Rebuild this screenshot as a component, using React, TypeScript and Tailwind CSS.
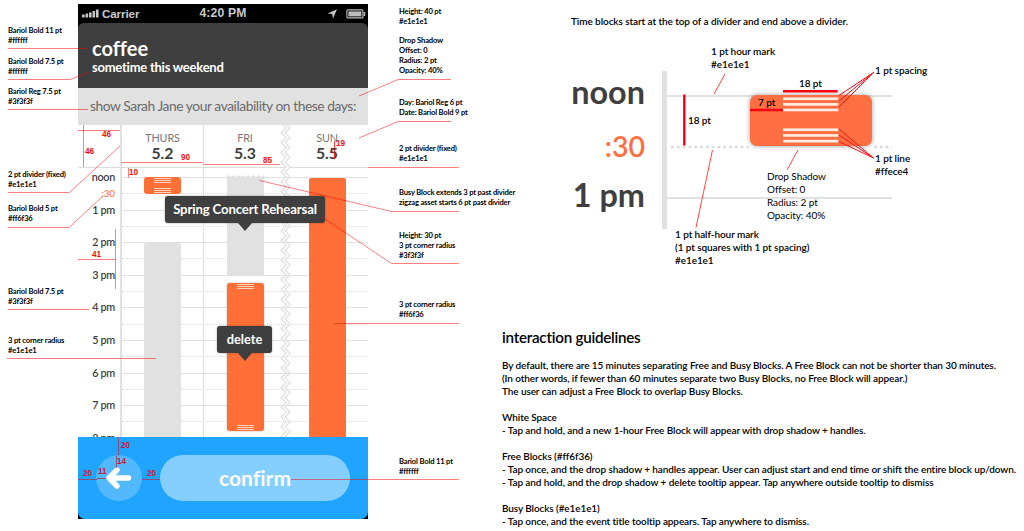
import React from "react";

type NoteProps = { at: string; lines: string[] };

/* Small callout label beside the phone */
function Note({ at, lines }: NoteProps) {
  return (
    <div className={"absolute whitespace-nowrap text-[7.6px] font-bold leading-[9.75px] tracking-[-0.17px] text-black " + at}>
      {lines.map((l, i) => (
        <p key={i}>{l}</p>
      ))}
    </div>
  );
}

/* Label inside the enlarged block diagram */
function Label({ at, lines }: NoteProps) {
  return (
    <div className={"absolute whitespace-nowrap text-[10px] leading-[13.1px] tracking-[-0.08px] text-black " + at}>
      {lines.map((l, i) => (
        <p key={i}>{l}</p>
      ))}
    </div>
  );
}

/* Red pixel measurement */
function Dim({ at, n }: { at: string; n: string }) {
  return (
    <span className={"absolute font-['Liberation_Sans',sans-serif] text-[8.2px] font-bold leading-[8px] " + at}>{n}</span>
  );
}

function zigzag(x: number, amp: number, from: number, to: number) {
  const pts: string[] = [];
  for (let y = from, i = 0; y <= to; y += 4.9, i++) pts.push(`${i % 2 ? x + amp : x},${y.toFixed(1)}`);
  return pts;
}

function ZigzagDivider() {
  const left = zigzag(1, 5, -2, 320);
  const right = zigzag(5.2, 5, -2, 320);
  return (
    <svg className="absolute left-[202px] top-0 h-[312px] w-[12px]" viewBox="0 0 12 312">
      <polygon points={[...left, ...[...right].reverse()].join(" ")} fill="#fafafa" />
      <polyline points={left.join(" ")} fill="none" stroke="#dedede" strokeWidth="1.1" />
      <polyline points={right.join(" ")} fill="none" stroke="#dedede" strokeWidth="1.1" />
    </svg>
  );
}

function StatusBar() {
  return (
    <div className="flex h-[19px] items-center justify-between bg-black pl-1 pr-[2px] font-['Liberation_Sans',sans-serif] text-[#c9c9c9]">
      <div className="flex w-[110px] items-center gap-[3px]">
        <svg width="17" height="9" viewBox="0 0 17 9" fill="#c4c4c4">
          <rect x="0" y="5.500" width="2.600" height="3" />
          <rect x="3.500" y="4.500" width="2.600" height="4" />
          <rect x="7" y="3.500" width="2.600" height="5" />
          <rect x="10.500" y="2" width="2.600" height="6.500" />
          <rect x="14" y="0.500" width="2.600" height="8" />
        </svg>
        <span className="text-[11.6px] font-bold leading-[19px] tracking-[-0.1px]">Carrier</span>
      </div>
      <span className="text-[12.2px] font-bold leading-[19px] tracking-[0.15px]">4:20 PM</span>
      <div className="flex w-[112px] items-center justify-end gap-[8px]">
        <svg width="11" height="10" viewBox="0 0 11 10" fill="#c4c4c4">
          <path d="M10 0.3 L6 9.4 L5.2 5 L0.6 4.6 Z" />
        </svg>
        <svg width="20" height="10" viewBox="0 0 20 10">
          <rect x="0.9" y="0.9" width="16" height="8" rx="1" fill="none" stroke="#bdbdbd" strokeWidth="1.1" />
          <rect x="2.4" y="2.4" width="13" height="5" fill="#bdbdbd" />
          <rect x="17.6" y="3" width="1.6" height="4" fill="#bdbdbd" />
        </svg>
      </div>
    </div>
  );
}

function DayHead({ day, date, width }: { day: string; date: string; width: string }) {
  return (
    <div className={"flex flex-col items-center pt-[5px] " + width}>
      <span className="text-[10.8px] leading-[15px] tracking-[-0.1px] text-[#777]">{day}</span>
      <span className="text-[15.8px] font-bold leading-[15px] text-[#3f3f3f]">{date}</span>
    </div>
  );
}

function Handles() {
  return (
    <div className="flex w-[17px] flex-col gap-[1px]">
      <div className="h-[1px] bg-[#ffd3c0]" />
      <div className="h-[1px] bg-[#ffd3c0]" />
      <div className="h-[1px] bg-[#ffd3c0]" />
    </div>
  );
}

function Tooltip({ at, text, size }: { at: string; text: string; size: string }) {
  return (
    <div className={"absolute flex flex-col items-center " + at}>
      <div className={"flex h-[27px] w-full items-center justify-center whitespace-nowrap rounded-[3px] bg-[#3f3f3f] font-bold text-white shadow-[0_0_2px_rgba(0,0,0,0.4)] " + size}>
        {text}
      </div>
      <svg width="14" height="8" viewBox="0 0 14 8">
        <path d="M0 0H14L7 8Z" fill="#3f3f3f" />
      </svg>
    </div>
  );
}

const hours = ["noon", "1 pm", "2 pm", "3 pm", "4 pm", "5 pm", "6 pm", "7 pm", "8 pm"];

function Schedule() {
  return (
    <div className="relative flex h-[269px] overflow-hidden">
      <div className="flex w-[42px] flex-col pr-[5px] pt-[1px] text-right text-[10.8px] font-semibold leading-[16.3px] tracking-[-0.3px] text-[#3f3f3f]">
        {hours.map((h, i) => (
          <div key={h} className="h-[32.6px] shrink-0 whitespace-nowrap">
            <p>{h}</p>
            {i === 0 && <p className="text-[9.8px] tracking-normal text-[#ff7f4c]">:30</p>}
          </div>
        ))}
      </div>
      <div className="w-[2px] bg-[#e1e1e1]" />
      <div className="flex flex-1 flex-col pt-[9px]">
        {hours.map((h) => (
          <div key={h} className="flex h-[32.6px] shrink-0 flex-col">
            <div className="h-[16.3px] border-t border-[#e1e1e1]" />
            <div className="h-[16.3px] border-t border-dotted border-[#dcdcdc]" />
          </div>
        ))}
      </div>
      <div className="absolute left-[125px] top-0 h-full w-px bg-[#e1e1e1]" />
      <div className="absolute left-[66px] top-[9px] flex h-[17px] w-[37px] flex-col items-center justify-between rounded-[3px] bg-[#ff6f36] py-[1px]">
        <Handles />
        <Handles />
      </div>
      <div className="absolute bottom-0 left-[66px] top-[75px] w-[37px] rounded-t-[2px] bg-[#e1e1e1]" />
      <div className="absolute left-[149px] top-[9px] h-[99px] w-[37px] rounded-b-[2px] bg-[#e1e1e1]" />
      <svg className="absolute left-[149px] top-[7px]" width="37" height="3" viewBox="0 0 37 3">
        <path d="M0 3V1L1.5 0L4 2L6.500 0L9 2L11.500 0L14 2L16.500 0L19 2L21.500 0L24 2L26.500 0L29 2L31.500 0L34 2L36 0L37 1V3Z" fill="#e1e1e1" />
      </svg>
      <div className="absolute left-[149px] top-[115px] flex h-[148px] w-[37px] flex-col items-center justify-between rounded-[3px] bg-[#ff6f36] py-[1px] shadow-[0_0_2px_rgba(0,0,0,0.35)]">
        <Handles />
        <Handles />
      </div>
      <div className="absolute bottom-0 left-[231px] top-[10px] w-[37px] rounded-t-[2px] bg-[#ff6f36]" />
      <Tooltip at="left-[87px] top-[28px] w-[160px]" text="Spring Concert Rehearsal" size="text-[13.2px] tracking-[-0.15px]" />
      <Tooltip at="left-[139px] top-[158px] w-[55px]" text="delete" size="text-[12.8px]" />
    </div>
  );
}

function Phone() {
  return (
    <div className="ml-[78px] mt-[4px] flex h-[515px] w-[290px] shrink-0 flex-col bg-black">
      <StatusBar />
      <header className="flex h-[65px] flex-col rounded-t-[6px] bg-[#3f3f3f] pl-[14px] pt-[12px] text-white">
        <h1 className="text-[20px] font-bold leading-[26px]">coffee</h1>
        <p className="text-[13px] font-bold leading-[13px] tracking-[-0.24px]">sometime this weekend</p>
      </header>
      <div className="flex h-[37px] items-center whitespace-nowrap bg-[#e1e1e1] pl-3 text-[13.8px] tracking-[-0.44px] text-[#6a6a6a]">
        show Sarah Jane your availability on these days:
      </div>
      <div className="relative flex h-[312px] flex-col bg-white">
        <div className="flex h-[42px]">
          <div className="w-[42px]" />
          <div className="w-[2px] bg-[#e1e1e1]" />
          <DayHead day="THURS" date="5.2" width="w-[81px]" />
          <div className="w-px bg-[#e1e1e1]" />
          <DayHead day="FRI" date="5.3" width="w-[82px]" />
          <DayHead day="SUN" date="5.5" width="w-[82px]" />
        </div>
        <div className="h-[1px] bg-[#dcdcdc]" />
        <ZigzagDivider />
        <Schedule />
      </div>
      <footer className="flex flex-1 items-center gap-[18px] rounded-b-[7px] bg-[#1fa5ff] pb-px pl-[18px]">
        <div className="flex size-[46px] items-center justify-center rounded-full bg-[#52b9ff]">
          <svg width="30" height="24" viewBox="0 0 30 24" fill="none" stroke="#fff" strokeWidth="5.4" strokeLinecap="round" strokeLinejoin="round">
            <path d="M13 4L5 12L13 20M5.500 12H24.500" />
          </svg>
        </div>
        <div className="flex h-[46px] w-[190px] items-center justify-center rounded-full bg-[#84cfff] text-[21px] font-bold text-white">confirm</div>
      </footer>
    </div>
  );
}

function PhoneCallouts() {
  return (
    <div className="absolute left-0 top-0 h-[531px] w-[470px] text-[#f01010]">
      <svg className="absolute left-0 top-0" width="470" height="531" viewBox="0 0 470 531" fill="none" stroke="#ff0000" strokeOpacity="0.5" strokeWidth="1">
        <path d="M8 48.500H88M8 79.500H70L90 72M8 109.500H88M8 192.500H69.500L120 146M8 227.500H69L103 196M8 309.500H89M7 358.500H156" />
        <path d="M451 79.500H398L359 96M451 121.500H398L359 138M368 167.500H459M259.500 180.500L391.500 211.500H459M322 217L391.500 263.500H459M334 323.500H459M291 479.500H459" />
        <path d="M83.500 125V167M78 130.500H120M121 162.500H203M203 164.500H280M128.500 168V177.500M115.500 229V289M78 259.500H115" />
        <path d="M334.500 141V159" strokeOpacity="0.8" />
        <path d="M118.500 437V455.500M116.500 455.500V468M78 479.500H97M142 479.500H160M97 478.500H106" stroke="#b0304c" strokeOpacity="0.75" />
      </svg>
      <Note at="left-[8px] top-[26px]" lines={["Bariol Bold 11 pt", "#ffffff"]} />
      <Note at="left-[8px] top-[57px]" lines={["Bariol Bold 7.5 pt", "#ffffff"]} />
      <Note at="left-[8px] top-[87px]" lines={["Bariol Reg 7.5 pt", "#3f3f3f"]} />
      <Note at="left-[8px] top-[170px]" lines={["2 pt divider (fixed)", "#e1e1e1"]} />
      <Note at="left-[8px] top-[204px]" lines={["Bariol Bold 5 pt", "#ff6f36"]} />
      <Note at="left-[8px] top-[287px]" lines={["Bariol Bold 7.5 pt", "#3f3f3f"]} />
      <Note at="left-[8px] top-[336px]" lines={["3 pt corner radius", "#e1e1e1"]} />
      <Note at="left-[399px] top-[7px]" lines={["Height: 40 pt", "#e1e1e1", "\u00a0", "Drop Shadow", "Offset: 0", "Radius: 2 pt", "Opacity: 40%"]} />
      <Note at="left-[399px] top-[98px]" lines={["Day: Bariol Reg 6 pt", "Date: Bariol Bold 9 pt"]} />
      <Note at="left-[399px] top-[144px]" lines={["2 pt divider (fixed)", "#e1e1e1"]} />
      <Note at="left-[399px] top-[188px]" lines={["Busy Block extends 3 pt past divider", "zigzag asset starts 6 pt past divider"]} />
      <Note at="left-[399px] top-[231px]" lines={["Height: 30 pt", "3 pt corner radius", "#3f3f3f"]} />
      <Note at="left-[399px] top-[300px]" lines={["3 pt corner radius", "#ff6f36"]} />
      <Note at="left-[399px] top-[457px]" lines={["Bariol Bold 11 pt", "#ffffff"]} />
      <Dim at="left-[102px] top-[131px]" n="46" />
      <Dim at="left-[85px] top-[148px]" n="46" />
      <Dim at="left-[181px] top-[154px]" n="90" />
      <Dim at="left-[263px] top-[157px]" n="85" />
      <Dim at="left-[336px] top-[140px]" n="19" />
      <Dim at="left-[129px] top-[169px]" n="10" />
      <Dim at="left-[92px] top-[251px]" n="41" />
      <Dim at="left-[121px] top-[442px] text-[#c81838]" n="20" />
      <Dim at="left-[117px] top-[458px] text-[#c81838]" n="14" />
      <Dim at="left-[98px] top-[468px] text-[#c81838]" n="11" />
      <Dim at="left-[83px] top-[470px] text-[#c81838]" n="20" />
      <Dim at="left-[147px] top-[470px] text-[#c81838]" n="20" />
    </div>
  );
}

function BlockDiagram() {
  const stripes = [97.4, 103, 108.6, 128.4, 134.1, 139.8];
  return (
    <div className="absolute left-0 top-0 h-[290px] w-[1024px]">
      <div className="absolute left-[662px] top-[71px] h-[158px] w-[5px] bg-[#e1e1e1]" />
      <div className="absolute left-[667px] top-[95px] h-[2px] w-[225px] bg-[#e1e1e1]" />
      <div className="absolute left-[667px] top-[197px] h-[2px] w-[225px] bg-[#e1e1e1]" />
      <div className="absolute left-[750px] top-[95px] h-[51px] w-[122px] rounded-[7px] bg-[#ff6f41] shadow-[0_0_5px_rgba(0,0,0,0.4)]" />
      <svg className="absolute left-0 top-0" width="1024" height="290" viewBox="0 0 1024 290" fill="none">
        <path d="M671 147H749M874 147H892" stroke="#dcdcdc" strokeWidth="2.600" strokeDasharray="2.900 2.900" />
        {stripes.map((y) => (
          <rect key={y} x="783" y={y} width="55.3" height="2.700" fill="#ffece4" />
        ))}
        <path d="M783 91.300H837.700M750 110H783M684.300 94.500V145.500" stroke="#f50010" strokeWidth="2.400" />
        <path d="M725 74L714 94M712.500 150L696 227.500M798 150L787 170" stroke="#ff4444" strokeWidth="1" />
        <path d="M873.500 72.500L839 95.500M873.500 72.500L839 101M873.500 72.500L839 107M873.500 158L839 129M873.500 158L839 135M873.500 158L839 141.500" stroke="#f50f14" strokeWidth="1" />
      </svg>
      <div className="absolute left-[565px] top-[66px] flex w-[80px] flex-col text-right text-[32.4px] font-bold text-[#3f3f3f]">
        <span className="leading-[51px]">noon</span>
        <span className="text-[28.5px] font-semibold leading-[58px] text-[#ff6f41]">:30</span>
        <span className="leading-[39px]">1 pm</span>
      </div>
      <Label at="left-[571px] top-[15px] font-semibold" lines={["Time blocks start at the top of a divider and end above a divider."]} />
      <Label at="left-[711px] top-[45px] font-semibold" lines={["1 pt hour mark", "#e1e1e1"]} />
      <Label at="left-[799px] top-[77px] font-semibold" lines={["18 pt"]} />
      <Label at="left-[758px] top-[96px] font-semibold" lines={["7 pt"]} />
      <Label at="left-[688px] top-[114px] font-semibold" lines={["18 pt"]} />
      <Label at="left-[875px] top-[64px] font-semibold" lines={["1 pt spacing"]} />
      <Label at="left-[875px] top-[152px] font-semibold" lines={["1 pt line", "#ffece4"]} />
      <Label at="left-[767px] top-[170px]" lines={["Drop Shadow", "Offset: 0", "Radius: 2 pt", "Opacity: 40%"]} />
      <Label at="left-[675px] top-[228px] font-semibold" lines={["1 pt half-hour mark", "(1 pt squares with 1 pt spacing)", "#e1e1e1"]} />
    </div>
  );
}

function Guidelines() {
  return (
    <section className="ml-[134px] mt-[327px] flex flex-col whitespace-nowrap text-[10px] font-semibold leading-[13.05px] tracking-[-0.1px] text-black">
      <h2 className="mb-[12px] text-[15.2px] leading-[20px] tracking-[-0.25px]">interaction guidelines</h2>
      <p>By default, there are 15 minutes separating Free and Busy Blocks. A Free Block can not be shorter than 30 minutes.</p>
      <p>(In other words, if fewer than 60 minutes separate two Busy Blocks, no Free Block will appear.)</p>
      <p>The user can adjust a Free Block to overlap Busy Blocks.</p>
      <h3 className="mt-[13px]">White Space</h3>
      <p>- Tap and hold, and a new 1-hour Free Block will appear with drop shadow + handles.</p>
      <h3 className="mt-[13px]">Free Blocks (#ff6f36)</h3>
      <p>- Tap once, and the drop shadow + handles appear. User can adjust start and end time or shift the entire block up/down.</p>
      <p>- Tap and hold, and the drop shadow + delete tooltip appear. Tap anywhere outside tooltip to dismiss</p>
      <h3 className="mt-[13px]">Busy Blocks (#e1e1e1)</h3>
      <p>- Tap once, and the event title tooltip appears. Tap anywhere to dismiss.</p>
    </section>
  );
}

export default function App() {
  return (
    <main className="relative flex h-[531px] w-[1024px] overflow-hidden bg-white font-['Lato',sans-serif] [font-variant-ligatures:none]">
      <Phone />
      <Guidelines />
      <BlockDiagram />
      <PhoneCallouts />
    </main>
  );
}
